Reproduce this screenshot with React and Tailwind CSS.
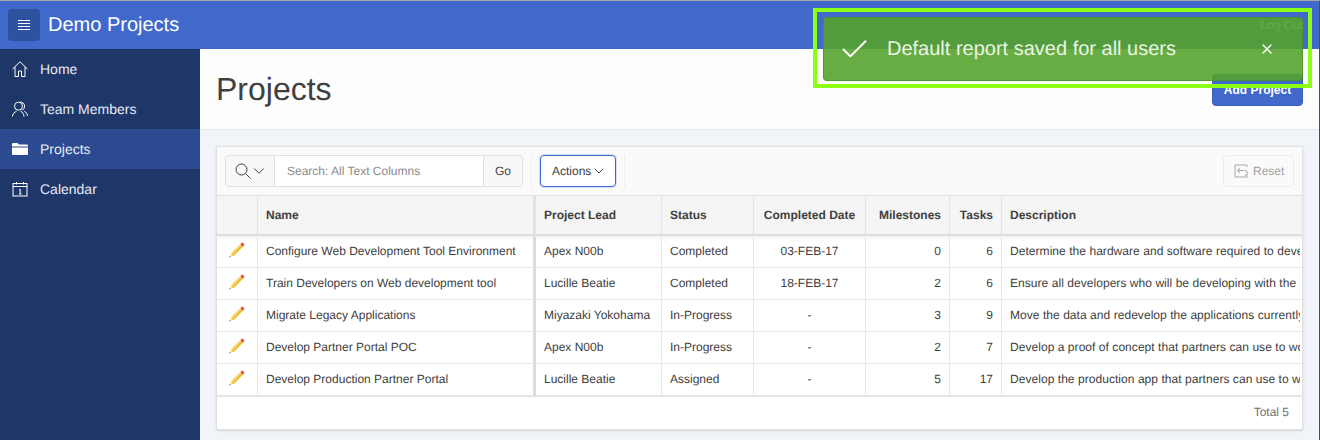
import React from "react";
import { Check, ChevronDown, X } from "lucide-react";

const rows = [
  {
    name: "Configure Web Development Tool Environment",
    lead: "Apex N00b",
    status: "Completed",
    date: "03-FEB-17",
    milestones: 0,
    tasks: 6,
    description: "Determine the hardware and software required to develop",
  },
  {
    name: "Train Developers on Web development tool",
    lead: "Lucille Beatie",
    status: "Completed",
    date: "18-FEB-17",
    milestones: 2,
    tasks: 6,
    description: "Ensure all developers who will be developing with the new",
  },
  {
    name: "Migrate Legacy Applications",
    lead: "Miyazaki Yokohama",
    status: "In-Progress",
    date: "-",
    milestones: 3,
    tasks: 9,
    description: "Move the data and redevelop the applications currently",
  },
  {
    name: "Develop Partner Portal POC",
    lead: "Apex N00b",
    status: "In-Progress",
    date: "-",
    milestones: 2,
    tasks: 7,
    description: "Develop a proof of concept that partners can use to work",
  },
  {
    name: "Develop Production Partner Portal",
    lead: "Lucille Beatie",
    status: "Assigned",
    date: "-",
    milestones: 5,
    tasks: 17,
    description: "Develop the production app that partners can use to work",
  },
];

const HomeIcon = () => (
  <svg width="16" height="16" viewBox="0 0 16 16" fill="none" stroke="currentColor" strokeWidth="1">
    <path d="M0.5 8 L8 0.8 L15.5 8 M3 6 V15.5 H6.5 V10 H9.5 V15.5 H13 V6" />
  </svg>
);

const TeamIcon = () => (
  <svg width="16" height="16" viewBox="0 0 16 16" fill="none" stroke="currentColor" strokeWidth="1">
    <circle cx="6.5" cy="5.2" r="4" />
    <path d="M7.5 1.3 A4 4 0 0 1 12.6 5.2 A4.2 4.2 0 0 1 10.2 9.2" />
    <path d="M0.5 15.5 C0.6 12.6 2.4 11.4 4.6 10.2 M8.6 10.2 C10.8 11.2 11.8 13 12 15.5 M12.2 10.2 C14 11 15.3 12.6 15.5 15" />
  </svg>
);

const FolderIcon = () => (
  <svg width="16" height="16" viewBox="0 0 16 16" fill="currentColor">
    <path d="M0 3 Q0 2 1 2 H5.5 L7 3.5 H15 Q16 3.5 16 4.5 V5.5 H0 Z" />
    <path d="M0 6.5 H16 V13 Q16 14 15 14 H1 Q0 14 0 13 Z" />
  </svg>
);

const CalendarIcon = () => (
  <svg width="16" height="16" viewBox="0 0 16 16" fill="none" stroke="currentColor" strokeWidth="1">
    <rect x="1" y="2.5" width="14" height="12.5" />
    <path d="M1 5.5 H15 M4.5 1 V3.5 M11.5 1 V3.5 M7 9 L8.2 8.3 V13 M7 13 H9.5" />
  </svg>
);

const SearchIcon = () => (
  <svg width="16" height="16" viewBox="0 0 16 16" fill="none" stroke="#404040" strokeWidth="1">
    <circle cx="6.5" cy="6.5" r="5.5" />
    <path d="M10.5 10.5 L15.5 15.5" />
  </svg>
);

const ResetIcon = () => (
  <svg width="14" height="14" viewBox="0 0 14 14" fill="none" stroke="#a8a8a8" strokeWidth="1">
    <path d="M13 3 V1 H1 V13 H13 V11" />
    <path d="M6 4 L3.5 6.5 L6 9 M3.5 6.5 H10.5 Q13.5 6.5 13.5 9 Q13.5 11 11 11.5" />
  </svg>
);

const PencilIcon = () => (
  <svg width="16" height="16" viewBox="0 0 16 16">
    <path d="M0.4 15.6 L1.8 11.6 L4.4 14.2 Z" fill="#f3e2b8" />
    <path d="M0.4 15.6 L0.9 14.1 L1.9 15.1 Z" fill="#555555" />
    <path d="M1.8 11.6 L11.2 2.2 L13.8 4.8 L4.4 14.2 Z" fill="#f5d257" />
    <path d="M3.2 12.9 L12.6 3.5 L13.8 4.8 L4.4 14.2 Z" fill="#ecb93f" />
    <path d="M11.2 2.2 L12.6 0.8 Q13.2 0.2 13.8 0.8 L15.2 2.2 Q15.8 2.8 15.2 3.4 L13.8 4.8 Z" fill="#de5b4c" />
  </svg>
);

const NavItem = ({ icon, label, active }) => (
  <div className={`flex h-10 items-center pl-3 text-sm text-[#e4e9f4] ${active ? "bg-[#2c4a8f]" : ""}`}>
    <span className="flex w-7 items-center text-white">{icon}</span>
    {label}
  </div>
);

const Th = ({ className = "", children }) => (
  <th className={`h-10 border-r border-b-2 border-r-[#e3e3e3] border-b-[#dedede] px-2 font-bold text-[#404040] ${className}`}>
    {children}
  </th>
);

const Td = ({ className = "", children }) => (
  <td className={`h-8 overflow-hidden whitespace-nowrap border-r border-b border-[#e8e8e8] px-2 pb-[2px] text-[#404040] ${className}`}>
    {children}
  </td>
);

const App = () => {
  return (
    <div
      className="relative flex h-[440px] w-[1320px] flex-col overflow-hidden border-t border-r border-t-[#a8a8a8] border-r-[#4a4d55] bg-[#f1f4f9] [text-rendering:geometricPrecision]"
      style={{ fontFamily: '"Liberation Sans", Arial, sans-serif' }}
    >
      {/* Header */}
      <header className="flex h-12 flex-none items-center bg-[#4169cc] pl-2">
        <button className="flex h-8 w-8 items-center justify-center rounded-sm bg-[#2f529f] text-white">
          <svg width="12" height="10" viewBox="0 0 12 10" stroke="currentColor" strokeWidth="1">
            <path d="M0 0.5 H12 M0 3.5 H12 M0 6.5 H12 M0 9.5 H12" />
          </svg>
        </button>
        <span className="ml-2 text-xl text-white">Demo Projects</span>
        <span className="ml-auto pr-4 text-xs text-[#dfe6f7]">Log Out</span>
      </header>

      <div className="flex min-h-0 flex-1">
        {/* Sidebar */}
        <nav className="w-[200px] flex-none bg-[#1f3668]">
          <NavItem icon={<HomeIcon />} label="Home" />
          <NavItem icon={<TeamIcon />} label="Team Members" />
          <NavItem icon={<FolderIcon />} label="Projects" active />
          <NavItem icon={<CalendarIcon />} label="Calendar" />
        </nav>

        {/* Main */}
        <main className="min-w-0 flex-1">
          <div className="flex h-[81px] items-center justify-between border-b border-[#e2e4e8] bg-[#fdfdfe] pl-4 pr-4">
            <h1 className="text-[32px] leading-10 text-[#404040]">Projects</h1>
            <button className="mt-px h-8 w-[91px] rounded-sm border border-[#3a5fb8] bg-[#4169cc] text-xs font-bold text-white">
              Add Project
            </button>
          </div>

          <div className="pl-4 pr-4 pt-4">
            <section className="h-[284px] overflow-hidden border border-[#e0e0e0] bg-white shadow-sm">
              {/* Toolbar */}
              <div className="flex h-[49px] items-center border-b border-[#e0e0e0] bg-[#fafafa] pl-2 pr-2">
                <div className="flex h-8 w-[50px] items-center rounded-l-sm border border-[#e0e0e0] bg-[#f8f8f8] pl-[9px]">
                  <SearchIcon />
                  <ChevronDown size={18} strokeWidth={1.3} color="#404040" className="-ml-px" />
                </div>
                <div className="flex h-8 w-[208px] items-center border-y border-[#e0e0e0] bg-white pl-3 text-xs text-[#8a8a8a]">
                  Search: All Text Columns
                </div>
                <div className="flex h-8 w-[40px] items-center justify-center rounded-r-sm border border-[#e0e0e0] bg-[#f8f8f8] text-xs text-[#404040]">
                  Go
                </div>
                <div className="mx-2 h-8 w-px bg-[#eeeeee]" />
                <div className="flex h-8 w-[76px] items-center rounded-sm border border-[#3f68cc] bg-white pl-[11px] text-xs text-[#404040] shadow-[0_0_0_1px_rgba(63,104,204,0.2)]">
                  Actions
                  <ChevronDown size={16} strokeWidth={1.4} />
                </div>
                <div className="mx-2 h-8 w-px bg-[#eeeeee]" />
                <div className="ml-auto flex h-8 w-[71px] items-center gap-[5px] rounded-sm border border-[#ececec] bg-[#fafafa] pl-[10px] text-xs text-[#a0a0a0]">
                  <ResetIcon />
                  Reset
                </div>
              </div>

              {/* Report */}
              <table className="w-[1085px] table-fixed border-separate border-spacing-0 text-xs">
                <colgroup>
                  <col className="w-[41px]" />
                  <col className="w-[278px]" />
                  <col className="w-[126px]" />
                  <col className="w-[92px]" />
                  <col className="w-[112px]" />
                  <col className="w-[84px]" />
                  <col className="w-[52px]" />
                  <col />
                </colgroup>
                <thead>
                  <tr className="bg-[#f5f5f5] shadow-[0_2px_4px_rgba(0,0,0,0.07)]">
                    <Th />
                    <Th className="border-r-[3px] border-r-[#dcdcdc] text-left">Name</Th>
                    <Th className="text-left">Project Lead</Th>
                    <Th className="text-left">Status</Th>
                    <Th className="text-center">Completed Date</Th>
                    <Th className="text-right">Milestones</Th>
                    <Th className="text-right">Tasks</Th>
                    <Th className="border-r-0 text-left">Description</Th>
                  </tr>
                </thead>
                <tbody>
                  {rows.map((row) => (
                    <tr key={row.name}>
                      <Td>
                        <span className="-mt-[2px] flex justify-center">
                          <PencilIcon />
                        </span>
                      </Td>
                      <Td className="border-r-[3px] border-r-[#dcdcdc]">{row.name}</Td>
                      <Td>{row.lead}</Td>
                      <Td>{row.status}</Td>
                      <Td className="text-center">{row.date}</Td>
                      <Td className="text-right">{row.milestones}</Td>
                      <Td className="text-right">{row.tasks}</Td>
                      <Td className="border-r-0 pr-[2px]">
                        <div className="overflow-hidden tracking-[0.05px]">{row.description}</div>
                      </Td>
                    </tr>
                  ))}
                </tbody>
              </table>

              {/* Footer */}
              <div className="flex h-[33px] items-center justify-end border-t border-[#e3e3e3] pb-[2px] pr-[13px] text-xs text-[#707070]">
                Total 5
              </div>
            </section>
          </div>
        </main>
      </div>

      {/* Success toast */}
      <div className="absolute left-[823px] top-[16px] flex h-[64px] w-[480px] items-center rounded-sm border border-[#4a8f30]/70 bg-[#55a32c]/[0.89] text-white">
        <Check size={33} strokeWidth={1.45} className="ml-[14px]" />
        <span className="ml-[16px] text-xl text-[#eaf4e4]">Default report saved for all users</span>
        <X size={16} strokeWidth={2} className="ml-auto mr-[27px]" />
      </div>

      {/* Highlight frame */}
      <div className="pointer-events-none absolute left-[813px] top-[7px] h-[80px] w-[499px] border-4 border-[#8cff17]" />
    </div>
  );
};

export default App;
